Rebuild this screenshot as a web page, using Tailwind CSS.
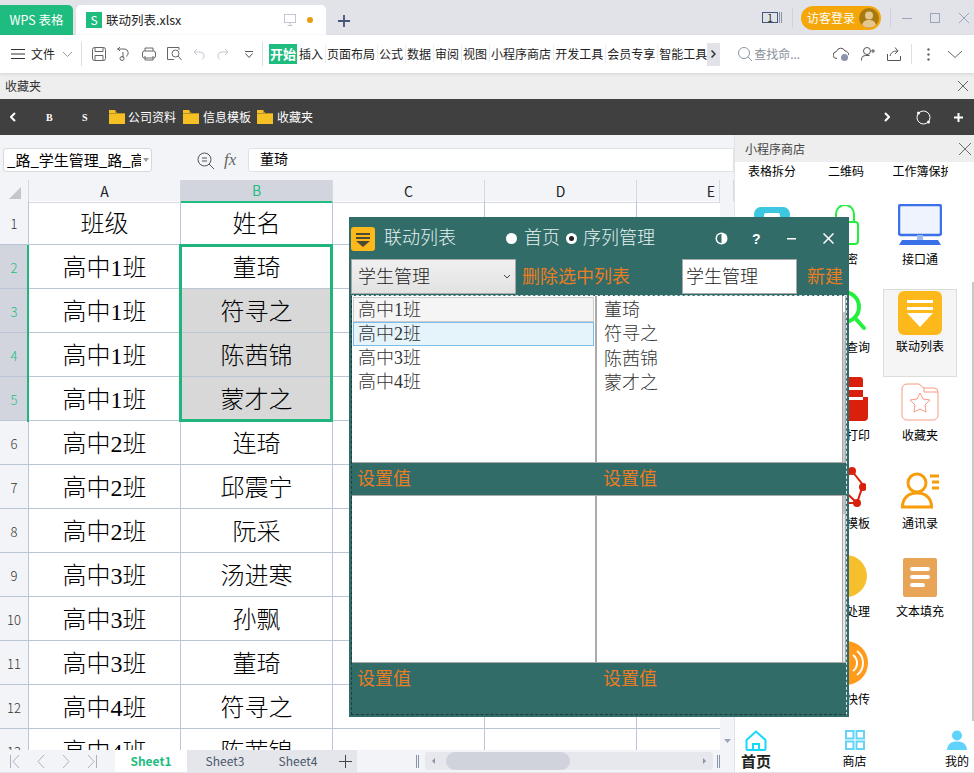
<!DOCTYPE html>
<html lang="zh-CN">
<head>
    <meta charset="UTF-8">
    <title>联动列表.xlsx - WPS 表格</title>
    <script src="https://cdn.jsdelivr.net/npm/@tailwindcss/browser@4"></script>
</head>
<body class="bg-white">
<div class="relative w-[974px] h-[773px] overflow-hidden flex flex-col text-black [font-family:'Noto_Sans_CJK_SC',sans-serif]">

    <!-- title bar -->
    <div class="h-[35px] shrink-0 bg-[#e1e3e8] flex items-end">
        <div class="w-[73px] h-[30px] bg-[#1fbc80] rounded-tr-[5px] text-white text-[12.5px] flex items-center justify-center">WPS 表格</div>
        <div class="ml-[3px] w-[250px] h-[30px] bg-white rounded-t-[5px] flex items-center pl-[10px]">
            <div class="w-[16px] h-[16px] bg-[#1fbc80] text-white text-[12px] leading-[16px] text-center">S</div>
            <span class="ml-[4px] text-[12.5px] text-[#222]">联动列表.xlsx</span>
            <svg class="ml-[103px] w-[12px] h-[12px]" viewBox="0 0 12 12" fill="none" stroke="#c0c8d6"><rect x="0.5" y="0.5" width="11" height="8"/><path d="M6 9v2.5M3.5 11.5h5"/></svg>
            <span class="ml-[11px] w-[6px] h-[6px] rounded-full bg-[#e89c10]"></span>
        </div>
        <svg class="ml-[12px] mb-[8px] w-[12px] h-[12px]" viewBox="0 0 13 13" stroke="#47567a" stroke-width="2"><path d="M6.5 0v13M0 6.5h13"/></svg>
        <div class="ml-auto h-full flex items-center relative">
            <div class="w-[16px] h-[11px] border border-[#47567a] text-[10px] leading-[10px] text-center text-[#222]">1</div>
            <svg class="ml-[1px] w-[4px] h-[11px]" viewBox="0 0 4 11" stroke="#8a94a8"><path d="M.5 0v11M2.5 0v11"/></svg>
            <div class="ml-[9px] w-px h-[20px] bg-[#cfd2d9]"></div>
            <div class="ml-[8px] w-[80px] h-[24px] rounded-full bg-[#f5a70a] flex items-center pl-[6px] text-white text-[12px]">访客登录
                <svg class="ml-[4px] w-[20px] h-[20px]" viewBox="0 0 20 20"><circle cx="10" cy="10" r="10" fill="#a87a10"/><circle cx="10" cy="7.5" r="4" fill="#e3c78f"/><path d="M3 17c1-4 4-5 7-5s6 1 7 5a10 10 0 0 1-14 0z" fill="#e3c78f"/></svg>
            </div>
            <div class="ml-[9px] w-px h-[20px] bg-[#cfd2d9]"></div>
            <svg class="ml-[11px] w-[10px] h-[10px]" viewBox="0 0 10 10" stroke="#9aa5bd"><path d="M0 5.5h10"/></svg>
            <svg class="ml-[18px] w-[10px] h-[10px]" viewBox="0 0 10 10" fill="none" stroke="#9aa5bd"><rect x=".5" y=".5" width="9" height="9"/></svg>
            <svg class="ml-[19px] mr-[5px] w-[10px] h-[10px]" viewBox="0 0 10 10" stroke="#9aa5bd"><path d="M0 0l10 10M10 0L0 10"/></svg>
        </div>
    </div>

    <!-- toolbar -->
    <div class="relative z-10 h-[38px] shrink-0 bg-white shadow-[0_1px_3px_rgba(0,0,0,0.12)] flex items-center text-[12px] text-[#222]">
        <svg class="ml-[11px] w-[14px] h-[10px]" viewBox="0 0 14 10" stroke="#333"><path d="M0 .5h14M0 5h14M0 9.5h14"/></svg>
        <span class="ml-[6px]">文件</span>
        <svg class="ml-[8px] w-[9px] h-[5px]" viewBox="0 0 9 5" fill="none" stroke="#999"><path d="M0 0l4.5 4.5L9 0"/></svg>
        <div class="ml-[9px] w-px h-[24px] bg-[#dcdfe4]"></div>
        <svg class="ml-[10px] w-[14px] h-[14px]" viewBox="0 0 14 14" fill="none" stroke="#666"><rect x=".5" y=".5" width="13" height="13" rx="2"/><path d="M3 .5v4h8v-4M3 13.5v-5h8v5"/></svg>
        <svg class="ml-[11px] w-[14px] h-[14px]" viewBox="0 0 14 14" fill="none" stroke="#666"><path d="M0 2h8a4 4 0 0 1 1 7.5M6 5v6"/><circle cx="5" cy="11.5" r="2"/><path d="M3 4L1 2l2-2"/></svg>
        <svg class="ml-[11px] w-[14px] h-[14px]" viewBox="0 0 14 14" fill="none" stroke="#666"><rect x=".5" y="4" width="13" height="7" rx="2"/><path d="M3 4V1h8v3M3 9v4h8V9"/></svg>
        <svg class="ml-[11px] w-[15px] h-[14px]" viewBox="0 0 15 14" fill="none" stroke="#666"><path d="M12 3V.5H.5v12H7"/><circle cx="8.5" cy="6.5" r="3.5"/><path d="M11 9l3.5 4"/></svg>
        <svg class="ml-[11px] w-[12px] h-[12px]" viewBox="0 0 12 12" fill="none" stroke="#c4c8d0"><path d="M4 1L1 4l3 3M1 4h6a4 4 0 0 1 2 7.500"/></svg>
        <svg class="ml-[12px] w-[12px] h-[12px]" viewBox="0 0 12 12" fill="none" stroke="#c4c8d0"><path d="M8 1l3 3-3 3M11 4H5a4 4 0 0 0-2 7.500"/></svg>
        <svg class="ml-[16px] w-[8px] h-[7px]" viewBox="0 0 8 7" fill="none" stroke="#555"><path d="M0 .5h8M.5 2.500L4 6.500l3.500-4"/></svg>
        <div class="ml-[9px] w-px h-[24px] bg-[#dcdfe4]"></div>
        <div class="ml-[6px] w-[28px] h-[20px] bg-[#1fbc80] text-white font-bold text-[13px] leading-[20px] text-center">开始</div>
        <div class="ml-[2px] flex items-center *:pr-[2px] *:mr-px *:border-r *:border-[#eceef1]">
            <span>插入</span><span>页面布局</span><span>公式</span><span>数据</span><span>审阅</span><span>视图</span><span>小程序商店</span><span>开发工具</span><span>会员专享</span><span>智能工具</span>
        </div>
        <div class="-ml-[4px] w-[13px] h-[23px] bg-[#e1e3e8] flex items-center justify-center">
            <svg class="w-[5px] h-[8px]" viewBox="0 0 5 8" fill="none" stroke="#333" stroke-width="1.500"><path d="M.5.500L4 4 .5 7.500"/></svg>
        </div>
        <svg class="ml-[18px] w-[14px] h-[14px]" viewBox="0 0 14 14" fill="none" stroke="#8a94a8"><circle cx="6" cy="6" r="5.500"/><path d="M10 10l4 4"/></svg>
        <span class="ml-[2px] text-[#8a8f99]">查找命...</span>
        <svg class="ml-[33px] w-[16px] h-[14px]" viewBox="0 0 16 14" fill="none" stroke="#555"><path d="M4 11.500a3.500 3.500 0 0 1-.5-7 4.500 4.500 0 0 1 8.500-.5 3.500 3.500 0 0 1 3.500 4"/><circle cx="11.500" cy="10.500" r="3.500" fill="#8a94a8" stroke="none"/></svg>
        <svg class="ml-[12px] w-[14px] h-[14px]" viewBox="0 0 14 14" fill="none" stroke="#555"><circle cx="6" cy="4" r="3.500"/><path d="M.5 13.500v-2a4 4 0 0 1 4-3h4M10 4h4M12 2v4"/></svg>
        <svg class="ml-[12px] w-[14px] h-[14px]" viewBox="0 0 14 14" fill="none" stroke="#555"><path d="M.5 7v6.500h13V9M3 9c1-4 4-5 7-5M8 .5L11 4 8 7"/></svg>
        <div class="ml-[10px] w-px h-[20px] bg-[#dcdfe4]"></div>
        <svg class="ml-[15px] w-[3px] h-[13px]" viewBox="0 0 3 13" fill="#666"><circle cx="1.500" cy="1.500" r="1.200"/><circle cx="1.500" cy="6.500" r="1.200"/><circle cx="1.500" cy="11.500" r="1.200"/></svg>
        <svg class="ml-[18px] w-[14px] h-[7px]" viewBox="0 0 14 7" fill="none" stroke="#666"><path d="M0 0l7 6.500L14 0"/></svg>
    </div>

    <!-- favorites label bar -->
    <div class="h-[26px] shrink-0 bg-[#eeeeee] flex items-center justify-between pl-[5px] pr-[6px] text-[12px] text-[#333]">
        <span>收藏夹</span>
        <svg class="w-[10px] h-[10px]" viewBox="0 0 10 10" stroke="#666"><path d="M0 0l10 10M10 0L0 10"/></svg>
    </div>

    <!-- bookmark bar -->
    <div class="h-[36px] shrink-0 bg-[#404040] flex items-center text-white text-[12px]">
        <svg class="ml-[10px] w-[6px] h-[10px]" viewBox="0 0 6 10" fill="none" stroke="#fff" stroke-width="2"><path d="M5 1L1 5l4 4"/></svg>
        <span class="ml-[30px] w-[6px] text-[10px] font-bold [font-family:'Liberation_Serif',serif]">B</span>
        <span class="ml-[30px] w-[6px] text-[10px] font-bold [font-family:'Liberation_Serif',serif]">S</span>
        <svg class="ml-[21px] w-[16px] h-[14px]" viewBox="0 0 16 14"><path d="M0 0h6l2 3h8v11H0z" fill="#f4c023"/><path d="M6 0l2 3h8v1H0V3h6z" fill="#b7932a"/></svg>
        <span class="ml-[3px]">公司资料</span>
        <svg class="ml-[7px] w-[16px] h-[14px]" viewBox="0 0 16 14"><path d="M0 0h6l2 3h8v11H0z" fill="#f4c023"/><path d="M6 0l2 3h8v1H0V3h6z" fill="#b7932a"/></svg>
        <span class="ml-[4px]">信息模板</span>
        <svg class="ml-[6px] w-[16px] h-[14px]" viewBox="0 0 16 14"><path d="M0 0h6l2 3h8v11H0z" fill="#f4c023"/><path d="M6 0l2 3h8v1H0V3h6z" fill="#b7932a"/></svg>
        <span class="ml-[4px]">收藏夹</span>
        <svg class="ml-auto w-[6px] h-[10px]" viewBox="0 0 6 10" fill="none" stroke="#fff" stroke-width="2"><path d="M1 1l4 4-4 4"/></svg>
        <svg class="ml-[26px] w-[15px] h-[15px]" viewBox="0 0 15 15" fill="none" stroke="#fff"><circle cx="7.500" cy="7.500" r="6.500"/><circle cx="2.500" cy="3" r="1.500" fill="#fff" stroke="none"/><circle cx="12.500" cy="12" r="1.500" fill="#fff" stroke="none"/></svg>
        <svg class="ml-[23px] mr-[11px] w-[9px] h-[9px]" viewBox="0 0 9 9" stroke="#fff" stroke-width="2"><path d="M4.500 0v9M0 4.500h9"/></svg>
    </div>

    <!-- workspace -->
    <div class="flex-1 flex min-h-0">
        <div class="w-[734px] shrink-0 flex flex-col">
            <!-- formula bar -->
            <div class="h-[45px] shrink-0 bg-[#f3f4f7] flex items-center pt-[5px]">
                <div class="ml-[3px] w-[149px] h-[24px] bg-white border border-[#d5d8de] rounded-[3px] flex items-center pl-[3px] text-[15px] overflow-hidden whitespace-nowrap">
                    <span class="w-[134px] overflow-hidden">_路_学生管理_路_高中</span>
                    <svg class="ml-[2px] w-[6px] h-[4px]" viewBox="0 0 6 4" fill="#999"><path d="M0 0h6L3 4z"/></svg>
                </div>
                <svg class="ml-[45px] w-[17px] h-[17px]" viewBox="0 0 17 17" fill="none" stroke="#555"><circle cx="7.500" cy="7.500" r="6.500"/><path d="M5 6h5M5 9h5M12 12l5 5"/></svg>
                <span class="ml-[10px] w-[16px] text-[17px] italic text-[#666] [font-family:'Liberation_Serif',serif]">fx</span>
                <div class="ml-[8px] flex-1 h-[24px] bg-white border border-[#dfe1e6] rounded-l-[3px] pl-[11px] text-[14px] leading-[19px]">董琦</div>
            </div>

            <!-- sheet -->
            <div class="relative flex-1 min-h-0 overflow-hidden bg-white">
                <div class="grid grid-cols-[29px_152px_152px_152px_152px_83px_14px] h-[21px] bg-[#f3f4f7] text-[14px] text-[#222] *:flex *:items-center *:justify-center *:border-r *:border-b *:border-[#d5d9e2]">
                    <div>
                        <svg class="ml-[2px] mt-[3px] w-[12px] h-[12px]" viewBox="0 0 12 12" fill="#c4c6ca"><path d="M12 0v12H0z"/></svg>
                    </div>
                    <div>A</div>
                    <div class="bg-[#d2d5dd] text-[#1fbc80] border-b-2! border-b-[#1fbc80]!">B</div>
                    <div>C</div>
                    <div>D</div>
                    <div class="justify-end! pr-[4px]">E</div>
                    <div class="bg-[#f3f4f7]"></div>
                </div>
                <div class="grid grid-cols-[29px_152px_152px_152px_152px_97px] auto-rows-[44px] text-[24px] font-light *:flex *:items-center *:justify-center *:pt-[3px] *:border-r *:border-b *:border-[#bcc5d6] [font-family:'Liberation_Serif','Noto_Sans_CJK_SC',serif]">
                    <div class="bg-[#f3f4f7] text-[13px] text-[#333] [font-family:'Noto_Sans_CJK_SC',sans-serif]">1</div><div>班级</div><div>姓名</div><div></div><div></div><div></div>
                    <div class="bg-[#d2d5dd] text-[13px] text-[#1fbc80] [font-family:'Noto_Sans_CJK_SC',sans-serif]">2</div><div>高中1班</div><div>董琦</div><div></div><div></div><div></div>
                    <div class="bg-[#d2d5dd] text-[13px] text-[#1fbc80] [font-family:'Noto_Sans_CJK_SC',sans-serif]">3</div><div>高中1班</div><div class="bg-[#d8d8d8]">符寻之</div><div></div><div></div><div></div>
                    <div class="bg-[#d2d5dd] text-[13px] text-[#1fbc80] [font-family:'Noto_Sans_CJK_SC',sans-serif]">4</div><div>高中1班</div><div class="bg-[#d8d8d8]">陈茜锦</div><div></div><div></div><div></div>
                    <div class="bg-[#d2d5dd] text-[13px] text-[#1fbc80] [font-family:'Noto_Sans_CJK_SC',sans-serif]">5</div><div>高中1班</div><div class="bg-[#d8d8d8]">蒙才之</div><div></div><div></div><div></div>
                    <div class="bg-[#f3f4f7] text-[13px] text-[#333] [font-family:'Noto_Sans_CJK_SC',sans-serif]">6</div><div>高中2班</div><div>连琦</div><div></div><div></div><div></div>
                    <div class="bg-[#f3f4f7] text-[13px] text-[#333] [font-family:'Noto_Sans_CJK_SC',sans-serif]">7</div><div>高中2班</div><div>邱震宁</div><div></div><div></div><div></div>
                    <div class="bg-[#f3f4f7] text-[13px] text-[#333] [font-family:'Noto_Sans_CJK_SC',sans-serif]">8</div><div>高中2班</div><div>阮采</div><div></div><div></div><div></div>
                    <div class="bg-[#f3f4f7] text-[13px] text-[#333] [font-family:'Noto_Sans_CJK_SC',sans-serif]">9</div><div>高中3班</div><div>汤进寒</div><div></div><div></div><div></div>
                    <div class="bg-[#f3f4f7] text-[13px] text-[#333] [font-family:'Noto_Sans_CJK_SC',sans-serif]">10</div><div>高中3班</div><div>孙飘</div><div></div><div></div><div></div>
                    <div class="bg-[#f3f4f7] text-[13px] text-[#333] [font-family:'Noto_Sans_CJK_SC',sans-serif]">11</div><div>高中3班</div><div>董琦</div><div></div><div></div><div></div>
                    <div class="bg-[#f3f4f7] text-[13px] text-[#333] [font-family:'Noto_Sans_CJK_SC',sans-serif]">12</div><div>高中4班</div><div>符寻之</div><div></div><div></div><div></div>
                    <div class="bg-[#f3f4f7] text-[13px] text-[#333] [font-family:'Noto_Sans_CJK_SC',sans-serif]">13</div><div>高中4班</div><div>陈茜锦</div><div></div><div></div><div></div>
                </div>
                <!-- selection outline -->
                <div class="absolute left-[179px] top-[64px] w-[154px] h-[178px] border-[3px] border-[#1fb57d]"></div>
                <div class="absolute left-[27px] top-[65px] w-[2px] h-[177px] bg-[#1fb57d]"></div>
                <!-- vertical scrollbar -->
                <div class="absolute right-0 top-[21px] bottom-0 w-[14px] bg-[#f3f4f7] flex items-end justify-center pb-[7px]">
                    <svg class="w-[7px] h-[4px]" viewBox="0 0 7 4" fill="#9aa5bd"><path d="M0 0h7L3.500 4z"/></svg>
                </div>
            </div>

            <!-- sheet tabs -->
            <div class="h-[23px] shrink-0 bg-[#f3f4f7] border-b border-[#e1e3e8] flex items-stretch text-[12px]">
                <div class="w-[115px] flex items-center pl-[10px] gap-[17px]">
                    <svg class="w-[10px] h-[13px]" viewBox="0 0 10 13" fill="none" stroke="#aab2c2"><path d="M.5 0v13M9 0L3 6.500 9 13"/></svg>
                    <svg class="w-[8px] h-[13px]" viewBox="0 0 8 13" fill="none" stroke="#aab2c2"><path d="M7 0L1 6.500 7 13"/></svg>
                    <svg class="w-[8px] h-[13px]" viewBox="0 0 8 13" fill="none" stroke="#aab2c2"><path d="M1 0l6 6.500L1 13"/></svg>
                    <svg class="w-[10px] h-[13px]" viewBox="0 0 10 13" fill="none" stroke="#aab2c2"><path d="M9.500 0v13M1 0l6 6.500L1 13"/></svg>
                </div>
                <div class="w-[72px] bg-white text-[#1fbc80] font-bold flex items-center justify-center">Sheet1</div>
                <div class="w-[76px] bg-[#e4e6ec] text-[#4d5668] flex items-center justify-center">Sheet3</div>
                <div class="w-[70px] bg-[#e4e6ec] text-[#4d5668] flex items-center justify-center">Sheet4</div>
                <div class="w-[24px] bg-[#e4e6ec] flex items-center justify-center">
                    <svg class="w-[13px] h-[13px]" viewBox="0 0 13 13" stroke="#444"><path d="M6.500 0v13M0 6.500h13"/></svg>
                </div>
                <div class="flex-1 flex items-center relative pl-[59px] pr-[14px]">
                    <svg class="mr-[6px] w-[3px] h-[13px]" viewBox="0 0 3 13" stroke="#8a94a8"><path d="M.5 0v13M2.500 0v13"/></svg>
                    <div class="flex-1 h-[18px] bg-[#e6e8ee] rounded-[3px] flex items-center pl-[7px]">
                        <svg class="w-[3px] h-[6px]" viewBox="0 0 3 6" fill="#8a94a8"><path d="M3 0v6L0 3z"/></svg>
                        <div class="ml-[11px] w-[124px] h-[18px] rounded-full bg-[#d0d3dc]"></div>
                        <svg class="ml-auto mr-[7px] w-[3px] h-[6px]" viewBox="0 0 3 6" fill="#8a94a8"><path d="M0 0v6l3-3z"/></svg>
                    </div>
                    <svg class="ml-[4px] w-[3px] h-[13px]" viewBox="0 0 3 13" stroke="#8a94a8"><path d="M.5 0v13M2.500 0v13"/></svg>
                </div>
            </div>
        </div>

        <!-- sidebar -->
        <div class="flex-1 min-w-0 flex flex-col border-l border-[#e1e3e8] bg-white">
            <div class="h-[27px] shrink-0 bg-[#eeeeee] flex items-center justify-between pl-[10px] pr-[3px] text-[12px] text-[#444]">
                <span>小程序商店</span>
                <svg class="w-[12px] h-[12px]" viewBox="0 0 10 10" stroke="#666" stroke-width="0.8"><path d="M0 0l10 10M10 0L0 10"/></svg>
            </div>
            <div class="relative flex-1 min-h-0 overflow-hidden">
                <div class="-mt-[49px] grid grid-cols-[74px_74px_74px] auto-rows-[88px] text-[12px] text-center *:flex *:flex-col *:items-center *:justify-end *:pb-[21px] *:gap-[5px]">
                    <div>表格拆分</div>
                    <div>二维码</div>
                    <div class="w-[74px] overflow-hidden whitespace-nowrap"><span class="block w-[55px] overflow-hidden">工作簿保护</span></div>

                    <div>
                        <div class="w-[36px] h-[38px] rounded-[7px] bg-[#3ec7e0] flex justify-center pt-[6px]"><div class="w-[16px] h-[10px] bg-white rounded-[2px]"></div></div>
                        <span>表格</span>
                    </div>
                    <div>
                        <svg class="w-[26px] h-[40px]" viewBox="0 0 26 40" fill="none" stroke="#22f03c" stroke-width="2"><path d="M3 17V9a9 9 0 0 1 18 0v8"/><rect x="1" y="17" width="24" height="22" rx="3"/></svg>
                        <span>加密</span>
                    </div>
                    <div>
                        <svg class="w-[44px] h-[41px]" viewBox="0 0 44 41"><rect x="1" y="1" width="42" height="30" rx="2" fill="#eef3fd" stroke="#3a70e8" stroke-width="2.500"/><rect x="19" y="31" width="6" height="5" fill="#9ab8f2"/><path d="M4 36h36l3 5H1z" fill="#3a70e8"/></svg>
                        <span>接口通</span>
                    </div>

                    <div></div>
                    <div>
                        <svg class="w-[44px] h-[44px]" viewBox="0 0 44 44" fill="none" stroke="#22f03c" stroke-width="4"><circle cx="20" cy="18" r="15"/><path d="M31 29l9 10" stroke-linecap="round"/></svg>
                        <span>数据查询</span>
                    </div>
                    <div class="bg-[#f5f5f5] border border-[#dcdcdc] mx-0 w-[74px] justify-start! pt-[1px] pb-0! gap-[2px]!">
                        <svg class="w-[44px] h-[44px]" viewBox="0 0 44 44"><rect width="44" height="44" rx="6" fill="#fdb81c"/><path d="M9 9h26v3H9zM9 16h26v3H9zM9 22h26L22 36z" fill="#fff"/></svg>
                        <span>联动列表</span>
                    </div>

                    <div></div>
                    <div>
                        <svg class="w-[44px] h-[44px]" viewBox="0 0 44 44" fill="#d9200c"><path d="M6 18h8V0h22a3 3 0 0 1 3 3v31H6z"/><path d="M24 10h15v3H24zM24 20h15v3H24z" fill="#fff"/><path d="M0 26h6v8h33v-14h5v20a4 4 0 0 1-4 4H4a4 4 0 0 1-4-4z"/></svg>
                        <span>批量打印</span>
                    </div>
                    <div>
                        <svg class="w-[38px] h-[38px]" viewBox="0 0 38 38" fill="none" stroke="#f79a86"><path d="M1 6a5 5 0 0 1 5-5h12l5 4h10a4 4 0 0 1 4 4v23a5 5 0 0 1-5 5H6a5 5 0 0 1-5-5z"/><path d="M23 5v4h14"/><path d="M19 10l3 6 7 1-5 5 1 7-6-3-6 3 1-7-5-5 7-1z"/></svg>
                        <span>收藏夹</span>
                    </div>

                    <div></div>
                    <div>
                        <svg class="w-[40px] h-[42px]" viewBox="0 0 40 42" fill="none" stroke="#d9200c" stroke-width="2"><path d="M26 4L37 18 31 36 12 36M26 4L12 18M31 36L12 18"/><g fill="#d9200c" stroke="none"><circle cx="26" cy="4" r="4"/><circle cx="37" cy="20" r="4"/><circle cx="31" cy="36" r="4"/><circle cx="12" cy="18" r="4"/></g></svg>
                        <span>分享模板</span>
                    </div>
                    <div>
                        <svg class="w-[38px] h-[37px]" viewBox="0 0 38 37" fill="none" stroke="#f79d0a" stroke-width="3"><circle cx="16" cy="11" r="9"/><path d="M1.500 35c0-9 6-14 14.500-14s14.500 5 14.500 14z"/><path d="M29 4h9M31 10h7M31 16h7"/></svg>
                        <span>通讯录</span>
                    </div>

                    <div></div>
                    <div>
                        <svg class="w-[42px] h-[42px]" viewBox="0 0 42 42"><circle cx="21" cy="21" r="21" fill="#f5bf2e"/></svg>
                        <span>图片处理</span>
                    </div>
                    <div>
                        <svg class="w-[34px] h-[39px]" viewBox="0 0 34 39"><rect width="34" height="39" rx="2" fill="#e8a558"/><path d="M9 11h16M9 19h16M9 27h11" stroke="#fff" stroke-width="4" stroke-linecap="round"/></svg>
                        <span>文本填充</span>
                    </div>

                    <div></div>
                    <div>
                        <svg class="w-[44px] h-[44px]" viewBox="0 0 44 44" fill="none"><circle cx="22" cy="22" r="22" fill="#ff9a1a"/><path d="M29 14a10 10 0 0 1 0 16M33 10a15 15 0 0 1 0 24" stroke="#fff" stroke-width="2"/></svg>
                        <span>文件快传</span>
                    </div>
                    <div></div>
                </div>
                <!-- sidebar scrollbar -->
                <div class="absolute right-0 top-[120px] bottom-[48px] w-[2px] bg-[#c8c8c8]"></div>
                <!-- bottom nav -->
                <div class="absolute left-0 right-0 bottom-0 h-[52px] bg-white border-b border-[#e1e3e8] grid grid-cols-[42px_1fr_44px] text-[12px] overflow-hidden">
                    <div class="flex flex-col items-center justify-end pb-[1px]">
                        <svg class="w-[22px] h-[21px]" viewBox="0 0 22 21" fill="none" stroke="#16d8f8" stroke-width="2"><path d="M1.500 10L11 1.500 20.500 10v9a1 1 0 0 1-1 1h-17a1 1 0 0 1-1-1zM8 20v-6h6v6"/></svg>
                        <span class="text-[15px] leading-[20px] font-bold text-[#222]">首页</span>
                    </div>
                    <div class="flex flex-col items-center justify-end pb-[2px] pl-[2px]">
                        <svg class="w-[20px] h-[20px]" viewBox="0 0 20 20" fill="none" stroke="#63d4f5" stroke-width="2"><rect x="1" y="1" width="7.500" height="7.500"/><rect x="11.500" y="1" width="7.500" height="7.500"/><rect x="1" y="11.500" width="7.500" height="7.500"/><rect x="11.500" y="11.500" width="7.500" height="7.500"/></svg>
                        <span class="mt-[2px] leading-[18px]">商店</span>
                    </div>
                    <div class="flex flex-col items-center justify-end pb-[2px] pl-[10px]">
                        <svg class="w-[20px] h-[20px]" viewBox="0 0 20 20" fill="#5fd3fb"><circle cx="10" cy="5.500" r="5"/><path d="M0 20c.5-6 4-8.500 10-8.500S19.500 14 20 20z"/></svg>
                        <span class="mt-[2px] leading-[18px] whitespace-nowrap">我的</span>
                    </div>
                </div>
            </div>
        </div>
    </div>

    <!-- floating dialog -->
    <div class="absolute left-[349px] top-[217px] w-[500px] h-[500px] bg-[#316c69] flex flex-col font-light [font-family:'Liberation_Serif','Noto_Sans_CJK_SC',serif] text-[18px]">
        <div class="h-[42px] shrink-0 flex items-center text-[#e6f2f0] pt-[1px]">
            <svg class="ml-[2px] w-[24px] h-[24px]" viewBox="0 0 24 24"><rect width="24" height="24" rx="3" fill="#fdb81c"/><path d="M5 6h14v2H5zM5 10h14v2H5zM5 14h14l-7 6z" fill="#4d4a33"/></svg>
            <span class="ml-[9px] w-[71px] whitespace-nowrap">联动列表</span>
            <span class="ml-[51px] w-[11px] h-[11px] rounded-full bg-white"></span>
            <span class="ml-[7px] whitespace-nowrap">首页</span>
            <span class="ml-[6px] w-[11px] h-[11px] rounded-full bg-white flex items-center justify-center"><span class="w-[5px] h-[5px] rounded-full bg-[#222]"></span></span>
            <span class="ml-[6px] whitespace-nowrap">序列管理</span>
            <svg class="ml-[60px] w-[13px] h-[13px]" viewBox="0 0 13 13"><circle cx="6.500" cy="6.500" r="6" fill="#fff"/><path d="M6.500 2a4.500 4.500 0 0 0 0 9z" fill="#316c69"/></svg>
            <span class="ml-[24px] w-[10px] text-[14px] font-bold text-white leading-none [font-family:'Liberation_Sans',sans-serif]">?</span>
            <svg class="ml-[25px] w-[9px] h-[2px]" viewBox="0 0 9 2" fill="#fff"><rect width="9" height="1.500"/></svg>
            <svg class="ml-[27px] w-[11px] h-[11px]" viewBox="0 0 11 11" stroke="#fff" stroke-width="1.500"><path d="M.5.500l10 10M10.500.500l-10 10"/></svg>
        </div>
        <div class="h-[36px] shrink-0 flex items-stretch pl-[2px] pb-px">
            <div class="w-[165px] border border-[#a8a8a8] bg-linear-to-b from-[#f0f0f0] to-[#e2e2e2] flex items-center pl-[6px] pt-px text-[#222]">
                <span>学生管理</span>
                <svg class="ml-auto mr-[5px] w-[6px] h-[4px]" viewBox="0 0 6 4" fill="none" stroke="#444"><path d="M0 0l3 3 3-3"/></svg>
            </div>
            <div class="ml-[6px] w-[160px] flex items-center pt-px font-normal text-[#ea7d22]">删除选中列表</div>
            <div class="w-[115px] border border-[#a8a8a8] bg-white flex items-center pl-[3px] pt-px text-[#222]">学生管理</div>
            <div class="ml-[10px] flex items-center pt-px font-normal text-[#ea7d22]">新建</div>
        </div>
        <div class="mx-[2px] mb-[2px] flex-1 min-h-0 flex flex-col border border-dashed border-[#1d3f3d] border-t-[#dfe6e5] border-r-[#dfe6e5]">
            <div class="h-[166px] flex">
                <div class="w-[245px] bg-white border-r-2 border-[#aaaaaa] p-px text-[#333]">
                    <div class="h-[25px] bg-[#f5f5f5] border border-[#cccccc] flex items-center pl-[4px] pt-px">高中1班</div>
                    <div class="h-[24px] bg-[#e5f3fb] border border-[#7bbde8] flex items-center pl-[4px] pt-px">高中2班</div>
                    <div class="h-[24px] flex items-center pl-[5px] pt-px">高中3班</div>
                    <div class="h-[24px] flex items-center pl-[5px] pt-px">高中4班</div>
                </div>
                <div class="flex-1 bg-white pt-[2px] text-[#333] *:h-[24.500px] *:flex *:items-center *:pl-[7px]">
                    <div>董琦</div>
                    <div>符寻之</div>
                    <div>陈茜锦</div>
                    <div>蒙才之</div>
                </div>
                <div class="w-[4px] bg-[#c8c8c8] border-x border-[#aaaaaa]"><div class="h-[16px] bg-white"></div></div>
            </div>
            <div class="h-[34px] shrink-0 flex border-y border-[#aaaaaa] font-normal text-[#ea7d22] items-center pr-[4px]">
                <span class="w-[246px] pl-[5px]">设置值</span>
                <span class="pl-[5px]">设置值</span>
            </div>
            <div class="h-[166px] flex">
                <div class="w-[245px] bg-white border-r-2 border-[#aaaaaa]"></div>
                <div class="flex-1 bg-white"></div>
                <div class="w-[4px] bg-[#e8e8e8] border-x border-[#aaaaaa]"><div class="h-[18px] bg-[#c0c0c0]"></div></div>
            </div>
            <div class="flex-1 flex border-t border-[#aaaaaa] font-normal text-[#ea7d22] pt-[3px] pr-[4px]">
                <span class="w-[246px] pl-[5px] h-fit">设置值</span>
                <span class="pl-[5px] h-fit">设置值</span>
            </div>
        </div>
    </div>
</div>
</body>
</html>
